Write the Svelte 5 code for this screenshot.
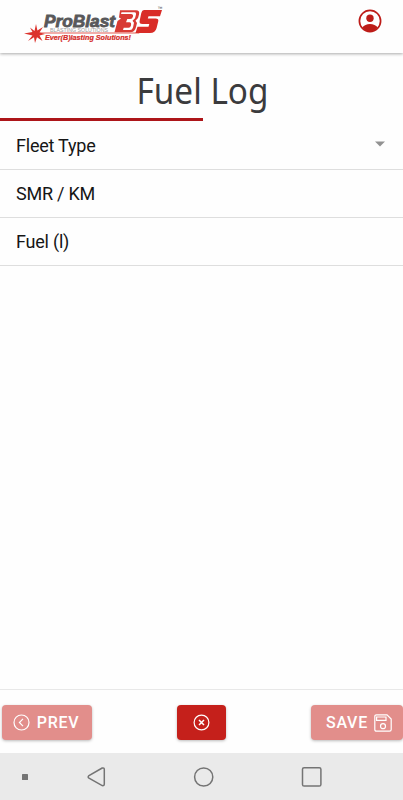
<script>
  const fields = ['Fleet Type', 'SMR / KM', 'Fuel (l)'];
</script>

<div class="screen">
  <header>
    <svg class="logo" width="146" height="42" viewBox="20 4 146 42" role="img" aria-label="ProBlast BS">
      <text class="brand" x="44" y="26.6" textLength="71" lengthAdjust="spacingAndGlyphs">ProBlast</text>
      <text class="sub" x="50" y="31.6" textLength="58" lengthAdjust="spacingAndGlyphs">BLASTING SOLUTIONS</text>
      <path d="M38 32.6H140L139 33.6H38Z" fill="#e35c55" />
      <path d="M120 10.3H136Q140 10.3 139 14.5L138 18L135.5 20.8L137 23L136 27Q135 32.3 130 32.3H114.5L117.5 21L121 18.5L119 17.5Z" fill="#d83a34" />
      <path d="M121.5 12.3H134.5Q136.5 12.3 136 14.5L135 18.3L132.5 20.8L134 22.8L133 27.5Q132.3 30 130 30H123L123.7 27.8H128.5Q130.5 27.8 131 25.5Q131.5 22.3 129.5 22.3H126L127.3 19H130Q132.5 19 133 16.5Q133.5 14 131 14H121Z" fill="#fff" />
      <path d="M144 10H162L160 16.3H148.5L147.8 18.5H155.5Q159 18.5 158.2 21.5L156.6 28Q155.3 33 150 33H135.5L137.5 26.8H148.5L149.3 24H142.5Q138.8 24 139.7 20.5L141.3 13Q142 10 144 10Z" fill="#d92c27" />
      <path d="M36 24L37.4 30.5L43 27L39.5 32.5L45 34L39.5 35.5L42.5 41L37 37.3L35 43L34 37.3L28 41L32.5 35.5L24 33.5L32.5 32L30 27.5L34.5 31Z" fill="#dc332d" />
      <text class="tag" x="45" y="40.2" textLength="86" lengthAdjust="spacingAndGlyphs">Ever(B)lasting Solutions!</text>
      <text class="tm" x="157.5" y="10">™</text>
    </svg>
    <svg class="user" width="24" height="24" viewBox="0 0 24 24">
      <circle cx="12" cy="12" r="10.6" fill="none" stroke="#bd1c18" stroke-width="1.7" />
      <circle cx="12" cy="9.2" r="3.7" fill="#bd1c18" />
      <path d="M4.2 18.5Q7 15 12 15T19.8 18.5Q16.8 22.5 12 22.5T4.2 18.5Z" fill="#bd1c18" />
    </svg>
  </header>

  <h1>Fuel Log</h1>
  <div class="progress"><i></i></div>

  <main>
    {#each fields as field, i}
      <div class="row">
        <span>{field}</span>
        {#if i === 0}<svg width="10" height="6" viewBox="0 0 10 6"><path d="M0 .5H10L5 5.5Z" fill="#929292" /></svg>{/if}
      </div>
    {/each}
  </main>

  <footer>
    <button class="prev">
      <svg width="17" height="17" viewBox="0 0 17 17"><circle cx="8.5" cy="8.5" r="7.5" /><path d="M10 4.9L6.4 8.5L10 12.1" /></svg>
      <span>PREV</span>
    </button>
    <button class="cancel" aria-label="Cancel">
      <svg width="17" height="17" viewBox="0 0 17 17"><circle cx="8.5" cy="8.5" r="7.4" /><path d="M6 6L11 11M11 6L6 11" stroke-width="1.5" /></svg>
    </button>
    <button class="save">
      <span>SAVE</span>
      <svg width="18" height="18" viewBox="0 0 18 18"><path d="M2.5 .8H13L17.2 5V15.5Q17.2 17.2 15.5 17.2H2.5Q.8 17.2 .8 15.5V2.5Q.8 .8 2.5 .8Z" /><path d="M2.6 3H12V6.4H2.6Z" /><circle cx="9" cy="12.2" r="2.5" /></svg>
    </button>
  </footer>

  <nav>
    <svg width="403" height="47" viewBox="0 0 403 47" fill="none" stroke="#747474" stroke-width="1.5">
      <rect x="22" y="21" width="6" height="6" rx=".6" fill="#747474" stroke="none" />
      <path d="M102.2 15L89 22.5Q87.3 24 89 25.2L102.2 32.6Q104.3 33 104.3 31V16.5Q104.3 14.5 102.2 15Z" />
      <circle cx="203.7" cy="24" r="9.1" />
      <rect x="302.5" y="14.7" width="18.4" height="18.4" rx="1.6" />
    </svg>
  </nav>
</div>

<style>
  :global(body) { margin: 0; background: #fff; }
  .screen { width: 100%; height: 800px; display: flex; flex-direction: column; overflow: hidden; background: #fefefe; font-family: Roboto, sans-serif; }
  header { height: 53px; box-sizing: border-box; flex: none; display: flex; justify-content: space-between; align-items: flex-start; padding: 4px 21px 0 20px; box-shadow: 0 1px 3px #0005; }
  .user { margin-top: 5px; }
  .logo text { font-family: "Liberation Sans", Arial, sans-serif; font-style: italic; }
  .logo .brand { font-size: 16px; font-weight: 700; fill: #58585a; stroke: #58585a; stroke-width: .8px; }
  .logo .sub { font-size: 4.6px; font-style: normal; fill: #999; }
  .logo .tag { font-size: 7px; font-weight: 700; fill: #d52b27; stroke: #d52b27; stroke-width: .2px; }
  .logo .tm { font-size: 5px; font-style: normal; fill: #444; }
  h1 { margin: 0; height: 65px; padding-top: 12px; box-sizing: border-box; text-align: center; font: 400 36px/52px "Noto Sans", sans-serif; color: #3b3b3d; transform: translateX(1px) scaleX(.925); }
  .progress { height: 3px; flex: none; }
  .progress i { display: block; width: 203px; height: 3px; background: #ad1519; }
  main { flex: 1; padding-top: .6px; }
  .row { height: 48.3px; box-sizing: border-box; border-bottom: 1px solid #dedede; padding: 0 18px 0 16px; display: flex; align-items: center; justify-content: space-between; font-size: 18px; letter-spacing: -.22px; color: #161616; }
  .row svg { margin-top: -3px; }
  footer { height: 64px; flex: none; box-sizing: border-box; border-top: 1px solid #e8e8e8; display: flex; justify-content: space-between; align-items: flex-start; padding: 15px 0 0 2px; }
  button { height: 35px; border: 0; border-radius: 4px; box-sizing: border-box; padding: 0; display: flex; align-items: center; justify-content: center; color: #fff; font: 500 16px Roboto, sans-serif; letter-spacing: .7px; background: #e28e8b; box-shadow: 0 1px 3px #0004; }
  button svg { fill: none; stroke: #fff; stroke-width: 1.2; }
  .prev { width: 90px; gap: 7px; padding-right: 2px; }
  .cancel { width: 49px; background: #c5201b; margin-right: 1px; }
  .save { width: 92px; gap: 6px; padding-left: 4px; }
  nav { height: 47px; flex: none; background: #eaeaea; }
  nav svg { display: block; }
</style>
